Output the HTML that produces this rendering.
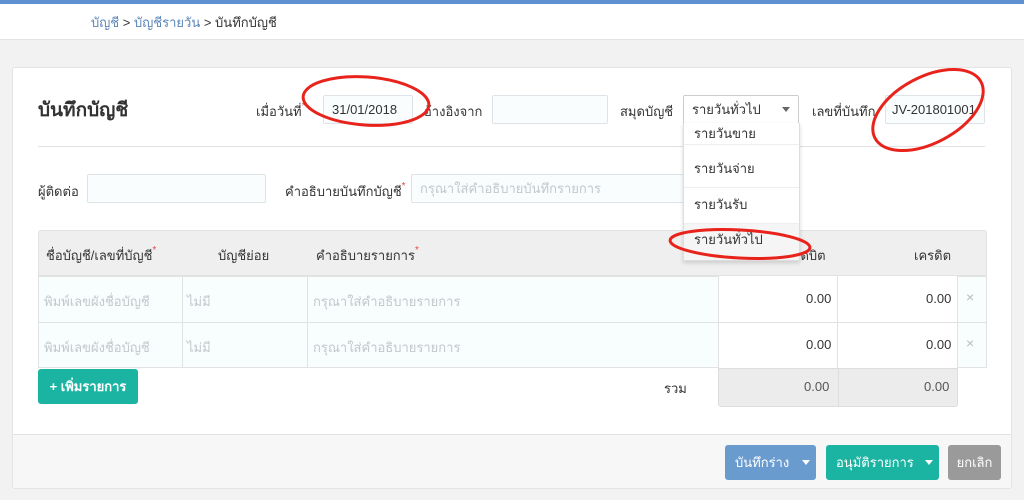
<!DOCTYPE html>
<html><head><meta charset="utf-8"><style>
*{box-sizing:border-box;margin:0;padding:0}
body{width:1024px;height:500px;overflow:hidden;background:#f2f2f2;font-family:"Liberation Sans","Noto Sans CJK SC",sans-serif;font-size:13px;color:#333;position:relative}
.a{position:absolute}
.inp{position:absolute;border:1px solid #dde3e6;background:#f9fdfe;border-radius:2px;padding:0 8px;display:flex;align-items:center;white-space:nowrap;overflow:hidden}
.lbl{position:absolute;font-size:13px;white-space:nowrap}
.req{color:#e04b4b;font-size:10px;vertical-align:top}
.ph{color:#c2c8cc}
.btn{position:absolute;color:#fff;border-radius:3px;display:flex;align-items:center;font-size:13px;white-space:nowrap}
.dd div{position:absolute;left:0;width:100%;padding-left:10px;line-height:36px}
</style></head><body>
<div class="a" style="left:0;top:0;width:1024px;height:4px;background:#5f91d2"></div>
<div class="a" style="left:0;top:4px;width:1024px;height:36px;background:#fff;border-bottom:1px solid #e2e2e2"></div>
<div class="a" style="left:91px;top:12px;font-size:13px"><span style="color:#5b86b8">บัญชี</span> &gt; <span style="color:#5b86b8">บัญชีรายวัน</span> &gt; บันทึกบัญชี</div>

<div class="a" style="left:12px;top:67px;width:1000px;height:422px;background:#fff;border:1px solid #e4e4e4;border-radius:3px"></div>
<div class="a" style="left:13px;top:434px;width:998px;height:54px;background:#f7f7f7;border-top:1px solid #e4e4e4"></div>

<div class="a" style="left:38px;top:95px;font-size:19px;font-weight:bold">บันทึกบัญชี</div>
<div class="lbl" style="left:256px;top:101px">เมื่อวันที่<span class="req">*</span></div>
<div class="inp" style="left:323px;top:95px;width:90px;height:29px">31/01/2018</div>
<div class="lbl" style="left:424px;top:101px">อ้างอิงจาก</div>
<div class="inp" style="left:492px;top:95px;width:116px;height:29px"></div>
<div class="lbl" style="left:620px;top:101px">สมุดบัญชี</div>
<div class="inp" style="left:683px;top:95px;width:116px;height:29px;background:#fff;border-color:#ccc">รายวันทั่วไป<span style="position:absolute;right:8px;top:11px;border:4px solid transparent;border-top:5px solid #666"></span></div>
<div class="lbl" style="left:812px;top:101px">เลขที่บันทึก</div>
<div class="inp" style="left:885px;top:95px;width:100px;height:29px;padding:0 6px">JV-201801001</div>
<div class="a" style="left:38px;top:146px;width:947px;height:1px;background:#e2e2e2"></div>

<div class="lbl" style="left:38px;top:181px">ผู้ติดต่อ</div>
<div class="inp" style="left:87px;top:174px;width:179px;height:29px"></div>
<div class="lbl" style="left:285px;top:181px">คำอธิบายบันทึกบัญชี<span class="req">*</span></div>
<div class="inp" style="left:411px;top:174px;width:380px;height:29px"><span class="ph">กรุณาใส่คำอธิบายบันทึกรายการ</span></div>

<div class="a" style="left:38px;top:230px;width:949px;height:46px;background:#efefef;border:1px solid #e2e2e2;border-radius:3px 3px 0 0"></div>
<div class="lbl" style="left:46px;top:245px">ชื่อบัญชี/เลขที่บัญชี<span class="req">*</span></div>
<div class="lbl" style="left:218px;top:245px">บัญชีย่อย</div>
<div class="lbl" style="left:316px;top:245px">คำอธิบายรายการ<span class="req">*</span></div>
<div class="lbl" style="left:796px;top:245px">เดบิต</div>
<div class="lbl" style="left:914px;top:245px">เครดิต</div>

<div class="a" style="left:38px;top:276px;width:949px;height:92px;background:#f8fdfe;border:1px solid #e2e2e2"></div>
<div class="a" style="left:38px;top:322px;width:949px;height:1px;background:#e2e2e2"></div>
<div class="a" style="left:182px;top:276px;width:1px;height:92px;background:#e2e2e2"></div>
<div class="a" style="left:307px;top:276px;width:1px;height:92px;background:#e2e2e2"></div>
<div class="a" style="left:718px;top:276px;width:120px;height:92px;background:#fff;border-left:1px solid #e2e2e2;border-right:1px solid #e2e2e2"></div>
<div class="a" style="left:838px;top:276px;width:120px;height:92px;background:#fff;border-right:1px solid #e2e2e2"></div>
<div class="a" style="left:718px;top:322px;width:269px;height:1px;background:#e2e2e2"></div>

<div class="lbl ph" style="left:44px;top:291px">พิมพ์เลขผังชื่อบัญชี</div>
<div class="lbl ph" style="left:187px;top:291px">ไม่มี</div>
<div class="lbl ph" style="left:313px;top:291px">กรุณาใส่คำอธิบายรายการ</div>
<div class="lbl" style="left:806px;top:291px">0.00</div>
<div class="lbl" style="left:926px;top:291px">0.00</div>
<div class="lbl" style="left:966px;top:289px;color:#bbb;font-size:14px">×</div>
<div class="lbl ph" style="left:44px;top:337px">พิมพ์เลขผังชื่อบัญชี</div>
<div class="lbl ph" style="left:187px;top:337px">ไม่มี</div>
<div class="lbl ph" style="left:313px;top:337px">กรุณาใส่คำอธิบายรายการ</div>
<div class="lbl" style="left:806px;top:337px">0.00</div>
<div class="lbl" style="left:926px;top:337px">0.00</div>
<div class="lbl" style="left:966px;top:335px;color:#bbb;font-size:14px">×</div>

<div class="btn" style="left:38px;top:369px;width:100px;height:35px;background:#1bb3a2;justify-content:center;font-weight:bold">+ เพิ่มรายการ</div>
<div class="lbl" style="left:664px;top:378px">รวม</div>
<div class="a" style="left:718px;top:368px;width:240px;height:39px;background:#ececec;border:1px solid #ddd;border-radius:0 0 3px 3px"></div>
<div class="a" style="left:838px;top:368px;width:1px;height:39px;background:#ddd"></div>
<div class="lbl" style="left:804px;top:379px;color:#555">0.00</div>
<div class="lbl" style="left:924px;top:379px;color:#555">0.00</div>

<div class="btn" style="left:725px;top:445px;width:91px;height:35px;background:#6a9bcf;padding-left:10px">บันทึกร่าง<span style="position:absolute;right:6px;top:15px;border:4px solid transparent;border-top:5px solid #fff"></span></div>
<div class="btn" style="left:826px;top:445px;width:113px;height:35px;background:#1bb3a2;padding-left:10px">อนุมัติรายการ<span style="position:absolute;right:6px;top:15px;border:4px solid transparent;border-top:5px solid #fff"></span></div>
<div class="btn" style="left:948px;top:445px;width:53px;height:35px;background:#9a9a9a;justify-content:center">ยกเลิก</div>

<div class="a dd" style="left:683px;top:123px;width:117px;height:138px;background:#fff;border:1px solid #ddd;border-top:none;box-shadow:0 2px 4px rgba(0,0,0,.15)">
<div style="top:-7px;height:29px;border-bottom:1px solid #eee;overflow:hidden">รายวันขาย</div>
<div style="top:29px;height:36px;border-bottom:1px solid #eee;line-height:34px">รายวันจ่าย</div>
<div style="top:65px;height:36px;border-bottom:1px solid #eee;line-height:34px">รายวันรับ</div>
<div style="top:101px;height:36px;background:#f5f5f5;line-height:32px">รายวันทั่วไป</div>
</div>

<svg class="a" style="left:0;top:0" width="1024" height="500">
<g fill="none" stroke="#e8231b" stroke-width="3">
<ellipse cx="366" cy="101" rx="63" ry="24" transform="rotate(4 366 101)"/>
<ellipse cx="928" cy="110" rx="60" ry="33" transform="rotate(-28 928 110)"/>
<ellipse cx="740" cy="244" rx="70" ry="14" transform="rotate(3 740 244)"/>
</g></svg>
</body></html>
